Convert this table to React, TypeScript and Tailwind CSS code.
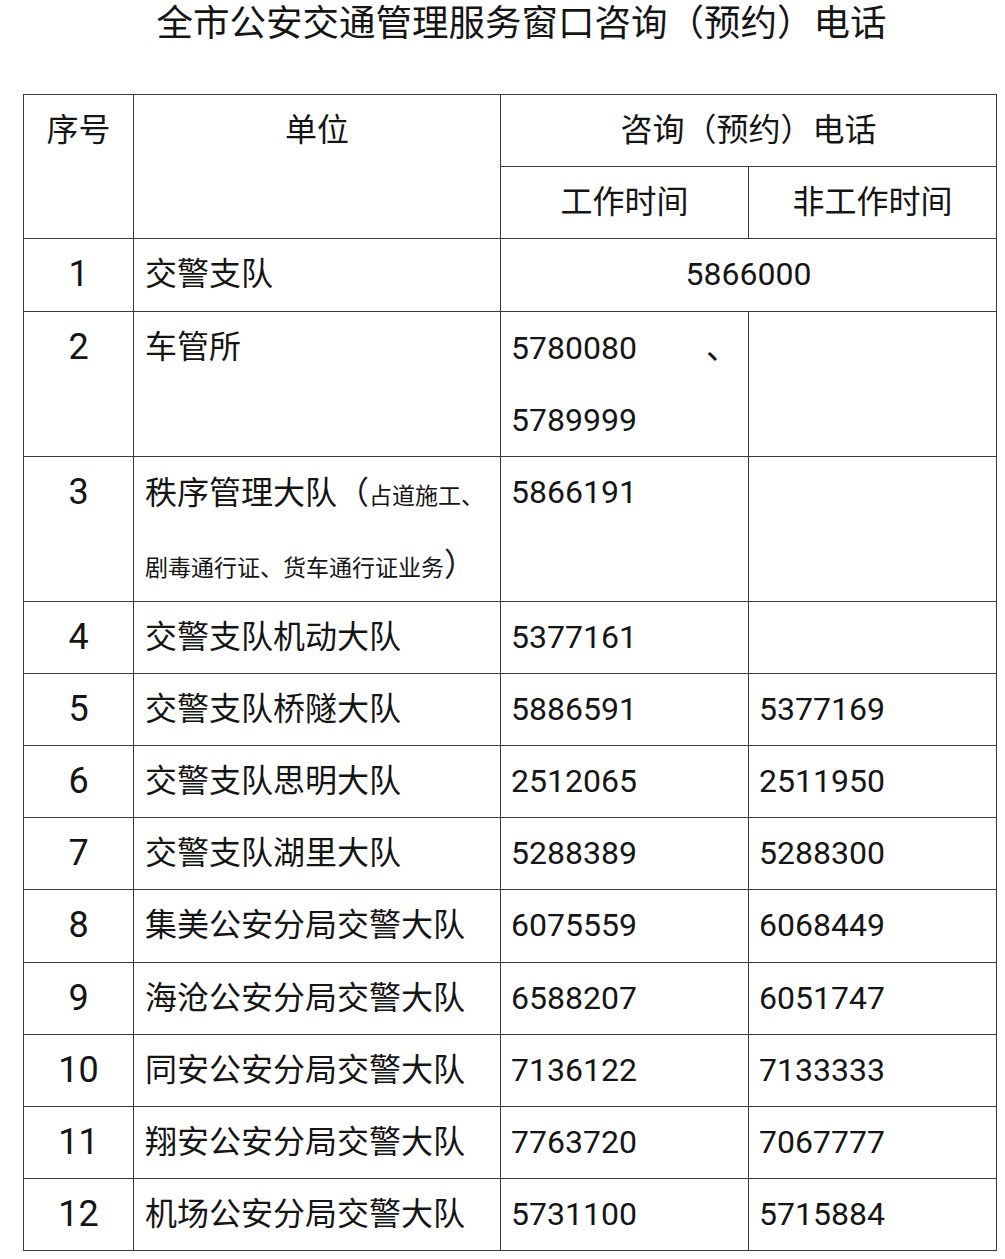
const rows: { no: string; unit: string; work: string; off: string }[] = [
  { no: "4", unit: "交警支队机动大队", work: "5377161", off: "" },
  { no: "5", unit: "交警支队桥隧大队", work: "5886591", off: "5377169" },
  { no: "6", unit: "交警支队思明大队", work: "2512065", off: "2511950" },
  { no: "7", unit: "交警支队湖里大队", work: "5288389", off: "5288300" },
  { no: "8", unit: "集美公安分局交警大队", work: "6075559", off: "6068449" },
  { no: "9", unit: "海沧公安分局交警大队", work: "6588207", off: "6051747" },
  { no: "10", unit: "同安公安分局交警大队", work: "7136122", off: "7133333" },
  { no: "11", unit: "翔安公安分局交警大队", work: "7763720", off: "7067777" },
  { no: "12", unit: "机场公安分局交警大队", work: "5731100", off: "5715884" },
];

const cell = "border-[1.5px] border-[#3a3a3a] align-top p-0 h-[71.2px] leading-[71.2px]";
const line = "h-[72px] leading-[72px] overflow-hidden whitespace-nowrap";

export default function App() {
  return (
    <div
      className="min-h-screen bg-white text-[#151515]"
      style={{ fontFamily: "Roboto, 'Noto Sans CJK SC', sans-serif" }}
    >
      <h1 className="pl-[38px] pt-[2px] text-center text-[36.5px] leading-[44px] font-normal">
        全市公安交通管理服务窗口咨询（预约）电话
      </h1>

      <table className="ml-[23px] mt-[48px] w-[973px] table-fixed border-collapse text-[32px]">
        <colgroup>
          <col className="w-[110px]" />
          <col className="w-[367px]" />
          <col className="w-[248px]" />
          <col className="w-[248px]" />
        </colgroup>
        <tbody>
          <tr>
            <td rowSpan={2} className={`${cell} text-center`}>序号</td>
            <td rowSpan={2} className={`${cell} text-center`}>单位</td>
            <td colSpan={2} className={`${cell} text-center`}>咨询（预约）电话</td>
          </tr>
          <tr>
            <td className={`${cell} text-center`}>工作时间</td>
            <td className={`${cell} text-center`}>非工作时间</td>
          </tr>

          <tr>
            <td className={`${cell} text-center text-[36px]`}>1</td>
            <td className={`${cell} pl-[11px]`}>交警支队</td>
            <td colSpan={2} className={`${cell} text-center`}>5866000</td>
          </tr>

          <tr>
            <td className={`${cell} text-center text-[36px]`}>2</td>
            <td className={`${cell} pl-[11px]`}>车管所</td>
            <td className={`${cell} pl-[10px] pr-[10px]`}>
              <div className={`${line} flex justify-between`}>
                <span>5780080</span>
                <span>、</span>
              </div>
              <div className={line}>5789999</div>
            </td>
            <td className={cell}></td>
          </tr>

          <tr>
            <td className={`${cell} text-center text-[36px]`}>3</td>
            <td className={`${cell} pl-[11px]`}>
              <div className={line}>
                秩序管理大队（<span className="text-[23px]">占道施工、</span>
              </div>
              <div className={line}>
                <span className="text-[23px]">剧毒通行证、货车通行证业务</span>）
              </div>
            </td>
            <td className={`${cell} pl-[10px]`}>5866191</td>
            <td className={cell}></td>
          </tr>

          {rows.map((r) => (
            <tr key={r.no}>
              <td className={`${cell} text-center text-[36px]`}>{r.no}</td>
              <td className={`${cell} pl-[11px] whitespace-nowrap`}>{r.unit}</td>
              <td className={`${cell} pl-[10px]`}>{r.work}</td>
              <td className={`${cell} pl-[10px]`}>{r.off}</td>
            </tr>
          ))}
        </tbody>
      </table>
    </div>
  );
}
